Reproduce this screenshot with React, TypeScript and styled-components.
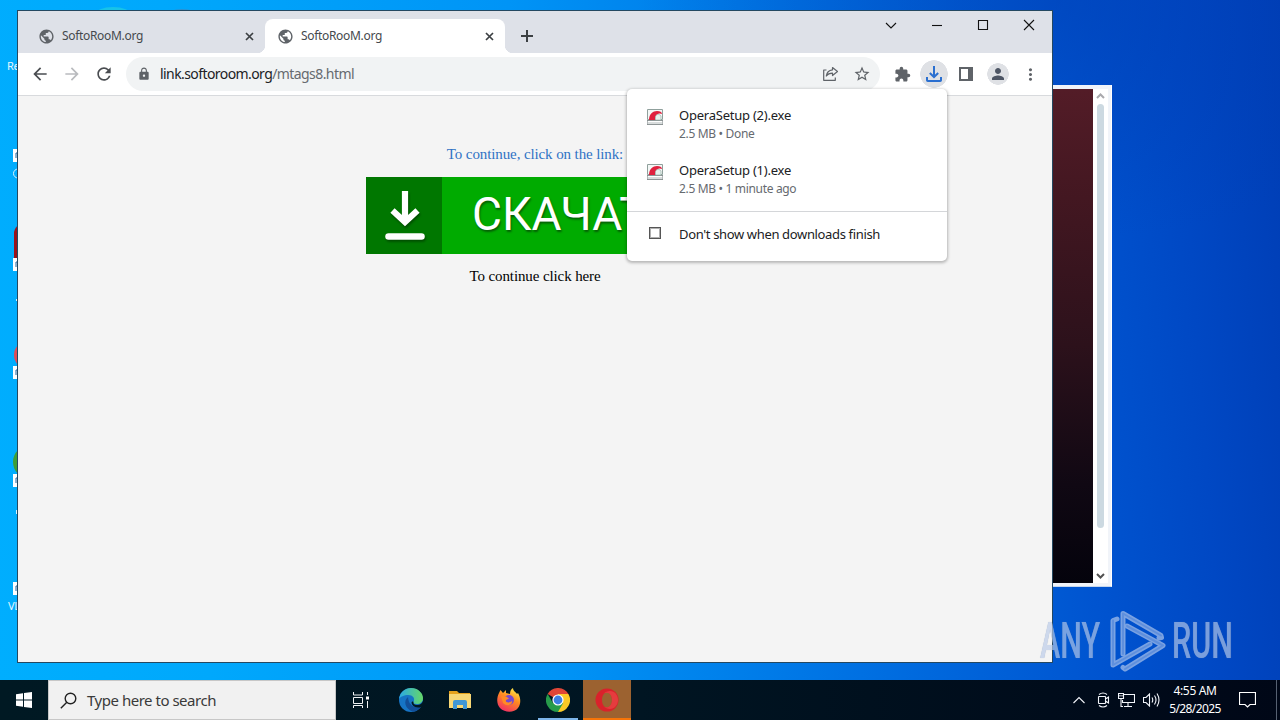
import React from 'react';
import styled, { createGlobalStyle } from 'styled-components';
import {
  MdArrowBack,
  MdArrowForward,
  MdExtension,
  MdLock,
  MdMoreVert,
  MdPerson,
  MdPublic,
  MdRefresh,
  MdStarBorder,
} from 'react-icons/md';

interface ILabel {
  size: number;
  color?: string;
  spacing?: number;
}

interface IDownload {
  name: string;
  status: string;
}

const downloads: IDownload[] = [
  { name: 'OperaSetup (2).exe', status: '2.5 MB • Done' },
  { name: 'OperaSetup (1).exe', status: '2.5 MB • 1 minute ago' },
];

function CloseIcon() {
  return (
    <svg width="9" height="9" viewBox="0 0 9 9" fill="none" stroke="#3c4043" strokeWidth="1.7">
      <path d="M1 1l7 7M8 1L1 8" />
    </svg>
  );
}

function OperaSetupIcon() {
  return (
    <svg width="16" height="16" viewBox="0 0 16 16">
      <path d="M.5.5h15v10h-15z" fill="#f4f7f6" stroke="#8fa09c" />
      <path d="M0 11.500h16v4H0z" fill="#d9dddd" stroke="#777f80" strokeWidth=".8" />
      <path d="M2 11C2 5 6 2 10 2c3 0 5 1 5 3-2-1-4-.500-5.500 1C8.500 7.500 8 9 8 11z" fill="#e0213f" />
      <path d="M8.500 11V7.500C9.500 5 12 4.500 14 7v4z" fill="#e6f2ee" stroke="#90a8a0" strokeWidth=".6" />
      <path d="M1 12.500h14" stroke="#fff" />
    </svg>
  );
}

function Tab({ active }: { active?: boolean }) {
  return (
    <STab $active={active}>
      <MdPublic size={17} color="#5f6368" />
      <STabTitle size={12} color="#45494d" spacing={-0.32}>SoftoRooM.org</STabTitle>
      <CloseIcon />
    </STab>
  );
}

function WindowControls() {
  return (
    <SControls>
      <svg width="12" height="12" viewBox="0 0 12 12"><path d="M1 4l5 5 5-5" /></svg>
      <svg width="12" height="12" viewBox="0 0 12 12"><path d="M1 6.500h10" /></svg>
      <svg width="12" height="12" viewBox="0 0 12 12"><path d="M1.500 1.500h9v9h-9z" /></svg>
      <svg width="12" height="12" viewBox="0 0 12 12"><path d="M1 1l10 10M11 1L1 11" /></svg>
    </SControls>
  );
}

function Toolbar() {
  return (
    <SToolbar>
      <SNav>
        <MdArrowBack size={20} color="#4a4d51" />
        <MdArrowForward size={20} color="#b9bbbe" />
        <MdRefresh size={20} color="#4a4d51" />
      </SNav>
      <SOmnibox>
        <MdLock size={14} color="#5f6368" />
        <SAddress size={14} color="#202124" spacing={-0.58}>
          link.softoroom.org<SPath>/mtags8.html</SPath>
        </SAddress>
        <SShare width="18" height="16" viewBox="0 0 18 16">
          <path d="M4.500 4H1.700v10.300h11.600V11.500" />
          <path d="M10.500 1.500l5 4-5 4V7.200C7.500 7.200 5.500 8.200 4.300 10c.4-3.300 2.500-5.800 6.200-6.200z" />
        </SShare>
        <MdStarBorder size={18} color="#5f6368" />
      </SOmnibox>
      <SActions>
        <SAction><MdExtension size={17} color="#5f6368" /></SAction>
        <SAction $round={28}>
          <svg width="18" height="18" viewBox="0 0 18 18" fill="none" stroke="#2a6fd0" strokeWidth="2">
            <path d="M9 1v11M4.800 8L9 12l4.200-4M2 12v3.200c0 .5.300.8.800.8h12.400c.5 0 .8-.3.800-.8V12" />
          </svg>
        </SAction>
        <SAction>
          <svg width="14" height="14" viewBox="0 0 14 14">
            <path d="M1 1h12v12H1z" fill="none" stroke="#5f6368" strokeWidth="2" />
            <path d="M9 1h4v12H9z" fill="#5f6368" />
          </svg>
        </SAction>
        <SAction $round={22}><MdPerson size={18} color="#4d5564" /></SAction>
        <SAction><MdMoreVert size={19} color="#5f6368" /></SAction>
      </SActions>
    </SToolbar>
  );
}

function DownloadBubble() {
  return (
    <SBubble>
      {downloads.map(({ name, status }) => (
        <SDownload key={name}>
          <OperaSetupIcon />
          <div>
            <SFileName size={13} color="#202124" spacing={-0.23}>{name}</SFileName>
            <SFileStatus size={12} color="#666a6f" spacing={-0.33}>{status}</SFileStatus>
          </div>
        </SDownload>
      ))}
      <SBubbleFooter>
        <SCheckbox />
        <Label size={13} color="#202124" spacing={-0.35}>Don't show when downloads finish</Label>
      </SBubbleFooter>
    </SBubble>
  );
}

function BrowserWindow() {
  return (
    <SBrowser>
      <STabStrip>
        <Tab />
        <Tab active />
        <SNewTab width="12" height="12" viewBox="0 0 12 12"><path d="M6 0v12M0 6h12" /></SNewTab>
        <WindowControls />
      </STabStrip>
      <Toolbar />
      <SPage>
        <SPageLink>To continue, click on the link:</SPageLink>
        <SDownloadButton>
          <SDownloadMark>
            <svg width="42" height="52" viewBox="0 0 42 52" stroke="#fff" fill="none">
              <path d="M21 1v31M8.500 20.500L21 32l12.500-11.500" strokeWidth="6.200" />
              <path d="M4.500 46.500h33" strokeWidth="6.500" strokeLinecap="round" />
            </svg>
          </SDownloadMark>
          <SDownloadText>СКАЧАТЬ</SDownloadText>
        </SDownloadButton>
        <SPageText>To continue click here</SPageText>
      </SPage>
      <DownloadBubble />
    </SBrowser>
  );
}

function BackWindow() {
  return (
    <SBackWindow>
      <SBackContent />
      <SScrollbar>
        <svg width="9" height="6" viewBox="0 0 9 6" fill="none" stroke="#a9a9ad" strokeWidth="2"><path d="M1 5l3.500-3.500L8 5" /></svg>
        <SThumb />
        <svg width="9" height="6" viewBox="0 0 9 6" fill="none" stroke="#505050" strokeWidth="2"><path d="M1 1l3.500 3.500L8 1" /></svg>
      </SScrollbar>
    </SBackWindow>
  );
}

function Shortcuts() {
  return (
    <svg width="240" height="680" viewBox="0 0 240 680">
      <ellipse cx="113" cy="15" rx="18" ry="8" fill="#17c3e8" />
      <ellipse cx="182" cy="16" rx="16" ry="7" fill="#2a91d2" />
      <path d="M14 232q1-5 5-7v35h-5z" fill="#99131c" />
      <circle cx="28" cy="355" r="14" fill="#df4c55" />
      <circle cx="30" cy="462" r="17" fill="#3d9e38" />
      {[149, 258, 366, 474, 582].map((y) => (
        <g key={y}>
          <path d={`M13 ${y}h8v13h-8z`} fill="#fff" />
          <path d={`M18 ${y + 4}h-2v5`} fill="none" stroke="#23639d" />
        </g>
      ))}
      <path d="M18 169a4 4 0 0 0 0 9M16.500 299v2M16.500 510v4" fill="none" stroke="#d8f4ff" />
    </svg>
  );
}

function Watermark() {
  return (
    <SWatermark>
      <SBrand><span>ANY</span></SBrand>
      <svg width="58" height="64" viewBox="0 0 58 64" fill="none" strokeLinejoin="round" strokeLinecap="round">
        <g stroke="#b9cdee" strokeWidth="5">
          <path d="M14 45V4.500L52 26.500l.500 2-2.500.5" />
          <path d="M8 10L4 11.500V56L41 35" />
          <path d="M18 17l36 19.500L16 60l-2-1.500" />
        </g>
        <g stroke="#8fb0e6" strokeWidth="2">
          <path d="M14 45V4.500L52 26.500" />
          <path d="M4 11.500V56L41 35" />
          <path d="M18 17l36 19.500L16 60" />
        </g>
      </svg>
      <SBrand><span>RUN</span></SBrand>
    </SWatermark>
  );
}

function EdgeIcon() {
  return (
    <svg width="24" height="24" viewBox="0 0 24 24">
      <defs>
        <linearGradient id="edgeTop" x1="0" x2="1">
          <stop offset="0" stopColor="#2aa9e6" />
          <stop offset="1" stopColor="#65d768" />
        </linearGradient>
      </defs>
      <circle cx="12" cy="12" r="12" fill="#1674c5" />
      <path d="M0 11C1 4 6 0 12 0c7 0 12 5 12 10 0 4-3 6-6 6-3 0-4-1-3.500-2 2-4-1-7-5-7C5 7 1 9 0 11z" fill="url(#edgeTop)" />
      <path d="M9 9c-5 4-3 12 5 14.800 4-.6 7-3 8.500-5.800-6 3-13 0-13.500-9z" fill="#124f99" />
      <path d="M14.500 14c-.5 1 .5 3 3.500 3 3 0 5-1.500 6-4v4l-1.500 2c-4 1.500-9 0-10-4 0-1 1-2 2-1z" fill="#001822" />
    </svg>
  );
}

function FolderIcon() {
  return (
    <svg width="22" height="20" viewBox="0 0 22 20">
      <path d="M0 1h8l2 2h11v4H0z" fill="#e6a21c" />
      <path d="M0 4h22v14H0z" fill="#f8d775" />
      <path d="M4 19v-7q0-2 2-2h10q2 0 2 2v7h-4v-4H8v4z" fill="#3f96d5" />
    </svg>
  );
}

function FirefoxIcon() {
  return (
    <svg width="24" height="24" viewBox="0 0 24 24">
      <defs>
        <linearGradient id="fox" x1=".8" y1="0" x2=".3" y2="1">
          <stop offset="0" stopColor="#fff04a" />
          <stop offset=".45" stopColor="#ff8a21" />
          <stop offset="1" stopColor="#f12d65" />
        </linearGradient>
      </defs>
      <path d="M2 5l1.500-3L6 5l3-3v3l4 1c0-3 1-5 3-6 0 3 3 4 4 6l1-1c3 5 3 11 0 15-4 5-13 5-18 0C-.500 16-.500 10 2 5z" fill="url(#fox)" />
      <circle cx="12" cy="12" r="5" fill="#7749cf" />
      <path d="M4 8l5 .5 3 2-3 1.500c-1 3 4 3 6 1 1 4-5 6-9 2z" fill="#ff8b25" />
    </svg>
  );
}

function ChromeIcon() {
  return (
    <svg width="24" height="24" viewBox="0 0 24 24">
      <path d="M12 12L1.600 6A12 12 0 0 1 22.400 6z" fill="#df4637" />
      <path d="M12 12V6h10.400A12 12 0 0 1 12 24z" fill="#fbc926" />
      <path d="M12 12l5.200 3L12 24A12 12 0 0 1 1.600 6L7 15z" fill="#279b4a" />
      <circle cx="12" cy="12" r="5.600" fill="#fff" />
      <circle cx="12" cy="12" r="4.400" fill="#3c7fe3" />
    </svg>
  );
}

function OperaIcon() {
  return (
    <svg width="24" height="24" viewBox="0 0 24 24">
      <path
        d="M12 .5a11.500 11.500 0 1 0 0 23 11.500 11.500 0 0 0 0-23zM12 4.500c3 0 5 3.300 5 7.500s-2 7.500-5 7.500S7 16.200 7 12s2-7.500 5-7.500z"
        fill="#d9222b"
        fillRule="evenodd"
      />
      <path d="M9 5.300C16 0 23 5 23 12s-7 12-14 6.700c5 2.300 8-2 8-6.700s-3-9-8-6.700z" fill="#e63c3e" />
    </svg>
  );
}

function Taskbar() {
  return (
    <STaskbar>
      <SStart>
        <svg width="16" height="16" viewBox="0 0 16 16" fill="#fff">
          <path d="M0 2.200l7-1v6.300H0zM8 1.100L16 0v7.500H8zM0 8.500h7v6.300l-7-1zM8 8.500h8V16l-8-1.100z" />
        </svg>
      </SStart>
      <SSearch>
        <svg width="17" height="17" viewBox="0 0 17 17" fill="none" stroke="#222" strokeWidth="1.400">
          <circle cx="10.500" cy="6.500" r="5.300" />
          <path d="M6.800 10.300L.8 16.300" />
        </svg>
        <Label size={15} color="#3a3a3a" spacing={-0.48}>Type here to search</Label>
      </SSearch>
      <STasks>
        <STask>
          <svg width="17" height="16" viewBox="0 0 17 16" fill="none" stroke="#f0f3f5">
            <path d="M1.500 0v3h9V0M1.500 5.500h9v6h-9zM1.500 16v-2.500h9V16M15.500 0v3M15.500 9v7" />
            <path d="M14 4.500h3v3h-3z" fill="#fff" stroke="none" />
          </svg>
        </STask>
        <STask><EdgeIcon /></STask>
        <STask><FolderIcon /></STask>
        <STask><FirefoxIcon /></STask>
        <STask $line="#7db5ea"><ChromeIcon /></STask>
        <STask $fill="#9c6230" $line="#f77408"><OperaIcon /></STask>
      </STasks>
      <STray>
        <svg width="12" height="8" viewBox="0 0 12 8"><path d="M.5 7L6 1.500 11.500 7" /></svg>
        <svg width="13" height="16" viewBox="0 0 13 16"><path d="M2 2.500q4-3 8 0M2 13.500q4 3 8 0M1.500 5q0-.5.500-.5h6q.5 0 .5.500v6q0 .500-.5.500H2q-.5 0-.5-.5zM8.500 7l3-2v6l-3-2" /></svg>
        <svg width="17" height="14" viewBox="0 0 17 14"><path d="M6 1.500h10.500v8H4.500V7M6 13.500h8M10 9.500v4M.5.500h5v5h-5zM3 5.500v8h2M2 2v1.500M4 2v1.500" /></svg>
        <svg width="17" height="14" viewBox="0 0 17 14"><path d="M.5 4.500H3L6.500 1v12L3 9.500H.5zM9 4.500q1.500 2.500 0 5M11.500 2.500q3 4.500 0 9M14 .5q4 6.500 0 13" /></svg>
      </STray>
      <SClock>
        <Label size={12} color="#fff" spacing={-0.35}>4:55 AM</Label>
        <Label size={12} color="#fff" spacing={-0.6}>5/28/2025</Label>
      </SClock>
      <SNotice width="17" height="17" viewBox="0 0 17 17"><path d="M.5.500h16v12H11L8.500 15 6 12.500H.5z" /></SNotice>
    </STaskbar>
  );
}

function App() {
  return (
    <SDesktop>
      <GlobalStyle />
      <Shortcuts />
      <SShortcutLabel $top={59} $left={7}>Recycle Bin</SShortcutLabel>
      <SShortcutLabel $top={599} $left={8}>VLC media</SShortcutLabel>
      <BackWindow />
      <BrowserWindow />
      <Watermark />
      <Taskbar />
    </SDesktop>
  );
}

const GlobalStyle = createGlobalStyle`
  * { box-sizing: border-box; }
  body { margin: 0; overflow: hidden; }
  svg { display: block; flex-shrink: 0; }
`;

const SDesktop = styled.div`
  position: relative;
  width: 1280px;
  height: 720px;
  overflow: hidden;
  font-family: 'Noto Sans', 'Open Sans', sans-serif;
  background:
    radial-gradient(ellipse 420px 240px at 1060px 0, rgba(0, 62, 180, 0.5), transparent),
    linear-gradient(86deg, #00aefe 0%, #00a8fc 16%, #0094f6 42%, #0070e2 65%, #0054d0 83%, #0048c4 92%, #003eb6 100%);
`;

const Label = styled.span<ILabel>`
  font-size: ${({ size }) => size}px;
  color: ${({ color }) => color};
  letter-spacing: ${({ spacing = 0 }) => spacing}px;
  white-space: nowrap;
`;

const SShortcutLabel = styled.span<{ $top: number; $left: number }>`
  position: absolute;
  top: ${({ $top }) => $top}px;
  left: ${({ $left }) => $left}px;
  color: #e3f6ff;
  font-size: 11px;
  line-height: 14px;
  letter-spacing: -0.4px;
  white-space: nowrap;
`;

const SBackWindow = styled.div`
  position: absolute;
  left: 700px;
  top: 85px;
  width: 412px;
  height: 502px;
  display: flex;
  padding: 4px 3px 3px 0;
  background: #f1f4f9;
  border-right: 1px solid #fff;
  border-bottom: 1px solid #c5d7ef;
`;

const SBackContent = styled.div`
  flex: 1;
  background: linear-gradient(180deg, #531c27 0%, #431721 22%, #2c111b 52%, #100813 80%, #04030c 100%);
`;

const SScrollbar = styled.div`
  width: 15px;
  display: flex;
  flex-direction: column;
  align-items: center;
  gap: 5px;
  padding: 4px 0;
  background: #fff;
`;

const SThumb = styled.div`
  width: 7px;
  height: 424px;
  margin-bottom: auto;
  border-radius: 4px;
  background: #ccd9e1;
`;

const SBrowser = styled.div`
  position: absolute;
  left: 17px;
  top: 10px;
  width: 1036px;
  height: 653px;
  display: flex;
  flex-direction: column;
  border: 1px solid #244861;
  background: #f4f4f4;
`;

const STabStrip = styled.div`
  height: 42px;
  display: flex;
  padding: 8px 17px 0 8px;
  background: #dee1e8;
`;

const STab = styled.div<{ $active?: boolean }>`
  position: relative;
  width: ${({ $active }) => ($active ? 240 : 239)}px;
  height: 34px;
  display: flex;
  align-items: center;
  padding: 0 11px 0 12px;
  border-radius: 8px 8px 0 0;
  background: ${({ $active }) => ($active ? '#fff' : 'transparent')};

  &::before,
  &::after {
    content: '';
    display: ${({ $active }) => ($active ? 'block' : 'none')};
    position: absolute;
    bottom: 0;
    width: 8px;
    height: 8px;
  }
  &::before {
    left: -8px;
    background: radial-gradient(circle at 0 0, transparent 8px, #fff 8.500px);
  }
  &::after {
    right: -8px;
    background: radial-gradient(circle at 100% 0, transparent 8px, #fff 8.500px);
  }
`;

const STabTitle = styled(Label)`
  flex: 1;
  margin: -1px 0 0 7px;
`;

const SNewTab = styled.svg`
  margin: 11px 0 0 16px;
  stroke: #3c4043;
  stroke-width: 2;
`;

const SControls = styled.div`
  display: flex;
  gap: 34px;
  margin-left: auto;

  svg {
    fill: none;
    stroke: #111;
    stroke-width: 1.1;
  }
`;

const SToolbar = styled.div`
  height: 43px;
  display: flex;
  align-items: center;
  padding-left: 12px;
  background: #fff;
  border-bottom: 1px solid #d8dadd;
`;

const SNav = styled.div`
  display: flex;
  gap: 12px;
  margin-right: 12px;
`;

const SOmnibox = styled.div`
  width: 754px;
  height: 34px;
  flex-shrink: 0;
  display: flex;
  align-items: center;
  padding: 0 9px 0 11px;
  border-radius: 17px;
  background: #f1f3f4;
`;

const SAddress = styled(Label)`
  flex: 1;
  margin: -2px 0 0 9px;
`;

const SPath = styled.span`
  color: #666a6f;
`;

const SShare = styled.svg`
  margin-right: 13px;
  fill: none;
  stroke: #5f6368;
  stroke-width: 1.2;
  stroke-linejoin: round;
`;

const SActions = styled.div`
  display: flex;
  margin-left: 6px;
`;

const SAction = styled.div<{ $round?: number }>`
  width: 32px;
  height: 28px;
  display: flex;
  align-items: center;
  justify-content: center;
  background: ${({ $round }) => ($round ? `radial-gradient(circle, #dfe1e5 ${$round / 2 - 0.5}px, transparent ${$round / 2}px)` : 'none')};
`;

const SPage = styled.div`
  flex: 1;
  display: flex;
  flex-direction: column;
  align-items: center;
  padding-top: 49px;
  font-family: 'Liberation Serif', serif;
  font-size: 15px;
  line-height: 18px;
  letter-spacing: -0.11px;
`;

const SPageLink = styled.span`
  color: #2f72c4;
`;

const SPageText = styled.span`
  margin-top: 13px;
  color: #000;
`;

const SDownloadButton = styled.div`
  width: 338px;
  height: 77px;
  margin-top: 14px;
  display: flex;
  overflow: hidden;
  background: #00ab00;
`;

const SDownloadMark = styled.div`
  width: 76px;
  display: flex;
  flex-shrink: 0;
  align-items: center;
  justify-content: center;
  padding-left: 2px;
  background: #007700;

  svg {
    filter: drop-shadow(1px 2px 1px #004d00);
  }
`;

const SDownloadText = styled.span`
  margin-left: 30px;
  font-family: Roboto, sans-serif;
  font-size: 46px;
  line-height: 75px;
  letter-spacing: 0;
  color: #fff;
  text-shadow: 1px 2px 2px #056005;
`;

const SBubble = styled.div`
  position: absolute;
  left: 609px;
  top: 78px;
  width: 320px;
  height: 172px;
  padding-top: 15px;
  border-radius: 5px;
  background: #fff;
  box-shadow: 0 1px 3px 1px rgba(0, 0, 0, 0.25);
`;

const SDownload = styled.div`
  height: 55px;
  display: flex;
  gap: 16px;
  padding: 5px 20px 0;

  > div {
    display: flex;
    flex-direction: column;
    margin-top: -3px;
  }
`;

const SFileName = styled(Label)`
  line-height: 18px;
`;

const SFileStatus = styled(Label)`
  line-height: 20px;
`;

const SBubbleFooter = styled.div`
  height: 49px;
  display: flex;
  align-items: center;
  gap: 18px;
  margin-top: -3px;
  padding: 0 22px 4px;
  border-top: 1px solid #d4d6d9;
`;

const SCheckbox = styled.div`
  width: 12px;
  height: 12px;
  margin-top: -3px;
  border: 1px solid #555;
  box-shadow: inset 0 0 0 1px #b0b0b0;
`;

const SWatermark = styled.div`
  position: absolute;
  left: 1040px;
  top: 609px;
  width: 200px;
  height: 64px;
  display: flex;
  align-items: center;
  gap: 5px;
  opacity: 0.66;

  > svg {
    margin-left: 2px;
  }
`;

const SBrand = styled.div`
  width: 62px;
  height: 64px;
  font-family: Roboto, sans-serif;
  font-size: 50px;
  font-weight: 500;
  line-height: 64px;
  color: #b9cbe9;
  text-shadow: 0 0 1px #8091ad;

  span {
    display: inline-block;
    transform: scaleX(0.61);
    transform-origin: 0 0;
  }
`;

const STaskbar = styled.div`
  position: absolute;
  left: 0;
  bottom: 0;
  width: 1280px;
  height: 40px;
  display: flex;
  align-items: center;
  padding-right: 3px;
  background: linear-gradient(90deg, #001923 0%, #001522 50%, #000717 100%);

  &::after {
    content: '';
    align-self: stretch;
    width: 1px;
    margin-left: 20px;
    background: #566071;
  }
`;

const SStart = styled.div`
  width: 48px;
  display: flex;
  justify-content: center;
`;

const SSearch = styled.div`
  width: 288px;
  height: 40px;
  display: flex;
  flex-shrink: 0;
  align-items: center;
  gap: 10px;
  padding-left: 11px;
  border: 1px solid #c7c7c7;
  background: #f1f1f1;
`;

const STasks = styled.div`
  display: flex;
  flex-shrink: 0;
  gap: 1px;
`;

const STask = styled.div<{ $fill?: string; $line?: string }>`
  width: 48px;
  height: 40px;
  display: flex;
  align-items: center;
  justify-content: center;
  background:
    linear-gradient(${({ $line = 'transparent' }) => `${$line}, ${$line}`})
      center bottom / ${({ $fill }) => ($fill ? 48 : 40)}px 2px no-repeat,
    ${({ $fill = 'transparent' }) => $fill};

  &:first-child {
    margin-right: 2px;
  }
`;

const STray = styled.div`
  display: flex;
  align-items: center;
  gap: 8px;
  margin-left: auto;

  svg {
    fill: none;
    stroke: #f2f5fa;
    stroke-width: 1.1;
  }
  svg:first-child {
    margin-right: 4px;
  }
`;

const SClock = styled.div`
  width: 70px;
  height: 36px;
  display: flex;
  flex-direction: column;
  align-items: center;
  line-height: 18px;
`;

const SNotice = styled.svg`
  margin-left: 9px;
  fill: none;
  stroke: #fff;
  stroke-width: 1.2;
`;

export default App;
